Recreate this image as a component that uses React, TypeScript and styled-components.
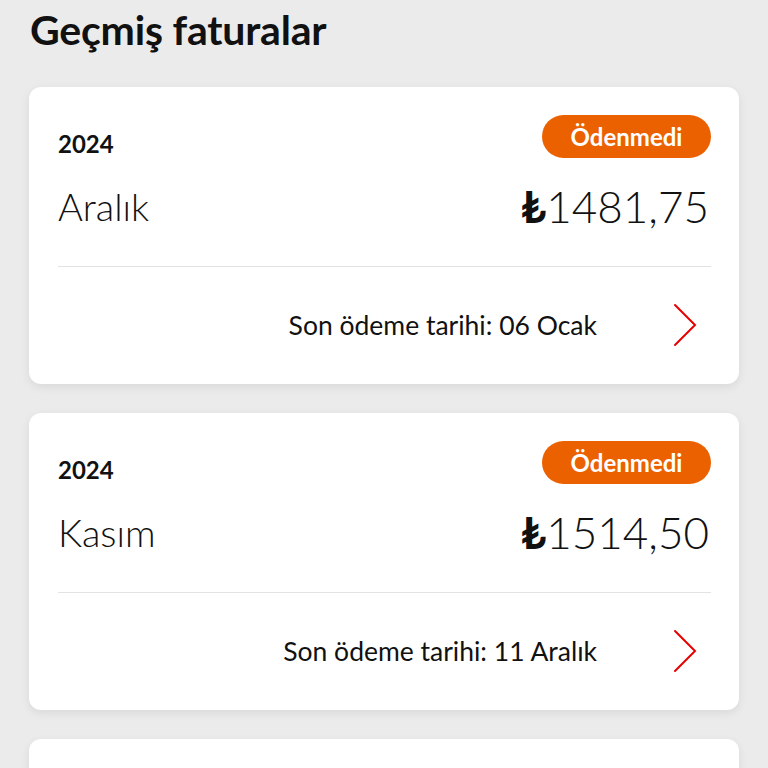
import React from "react";
import styled, { createGlobalStyle } from "styled-components";

const GlobalStyle = createGlobalStyle`
  html, body {
    margin: 0;
    padding: 0;
    background: #ebebeb;
  }
  body {
    font-family: "Lato", "Open Sans", sans-serif;
    color: #111;
    overflow: hidden;
  }
`;

interface Bill {
  year: string;
  month: string;
  amount: string;
  due: string;
}

const bills: Bill[] = [
  { year: "2024", month: "Aralık", amount: "1481,75", due: "06 Ocak" },
  { year: "2024", month: "Kasım", amount: "1514,50", due: "11 Aralık" },
];

const Chevron = () => (
  <svg width="26" height="44" viewBox="0 0 26 44" fill="none">
    <path
      d="M3 2 L23 22 L3 42"
      stroke="#e60000"
      strokeWidth="2"
      strokeLinecap="round"
      strokeLinejoin="miter"
    />
  </svg>
);

const BillCard = ({ bill }: { bill: Bill }) => (
  <Card>
    <TopRow>
      <Year>{bill.year}</Year>
      <Badge>Ödenmedi</Badge>
    </TopRow>
    <MainRow>
      <Month>{bill.month}</Month>
      <Amount>
        <Lira>₺</Lira>
        {bill.amount}
      </Amount>
    </MainRow>
    <Divider />
    <Footer>
      <Due>Son ödeme tarihi: {bill.due}</Due>
      <Chevron />
    </Footer>
  </Card>
);

export default function App() {
  return (
    <>
      <GlobalStyle />
      <Page>
        <Title>Geçmiş faturalar</Title>
        <List>
          {bills.map((b) => (
            <BillCard key={b.month} bill={b} />
          ))}
          {/* next bill card, only its top edge is visible */}
          <Card />
        </List>
      </Page>
    </>
  );
}

const Page = styled.div`
  padding: 6px 29px 0 29px;
  height: 768px;
  box-sizing: border-box;
  overflow: hidden;
`;

const Title = styled.h1`
  margin: 0 0 0 1px;
  font-size: 41px;
  font-weight: 700;
  line-height: 48px;
  letter-spacing: -0.2px;
  color: #111;
`;

const List = styled.div`
  margin-top: 33px;
  display: flex;
  flex-direction: column;
  gap: 29px;
`;

const Card = styled.div`
  background: #fff;
  border-radius: 12px;
  box-shadow: 0 3px 10px rgba(0, 0, 0, 0.08);
  padding: 28px 28px 0 29px;
  height: 297px;
  box-sizing: border-box;
  display: flex;
  flex-direction: column;
  flex-shrink: 0;
`;

const TopRow = styled.div`
  display: flex;
  justify-content: space-between;
  align-items: center;
  height: 43px;
`;

const Year = styled.div`
  font-size: 24px;
  font-weight: 700;
  margin-top: 14px;
`;

const Badge = styled.div`
  background: #eb6100;
  color: #fff;
  font-size: 24px;
  font-weight: 700;
  height: 43px;
  width: 169px;
  border-radius: 22px;
  display: flex;
  align-items: center;
  justify-content: center;
`;

const MainRow = styled.div`
  display: flex;
  justify-content: space-between;
  align-items: center;
  margin-top: 26px;
  height: 44px;
`;

const Month = styled.div`
  font-size: 38px;
  font-weight: 300;
`;

const Amount = styled.div`
  font-size: 44px;
  font-weight: 300;
  margin-right: 2px;
`;

const Lira = styled.span`
  font-weight: 700;
`;

const Divider = styled.div`
  height: 1px;
  background: #e2e2e2;
  margin-top: 38px;
`;

const Footer = styled.div`
  display: flex;
  justify-content: flex-end;
  align-items: center;
  height: 120px;
  gap: 75px;
  padding-right: 13px;
`;

const Due = styled.div`
  font-size: 26.5px;
  font-weight: 400;
`;
